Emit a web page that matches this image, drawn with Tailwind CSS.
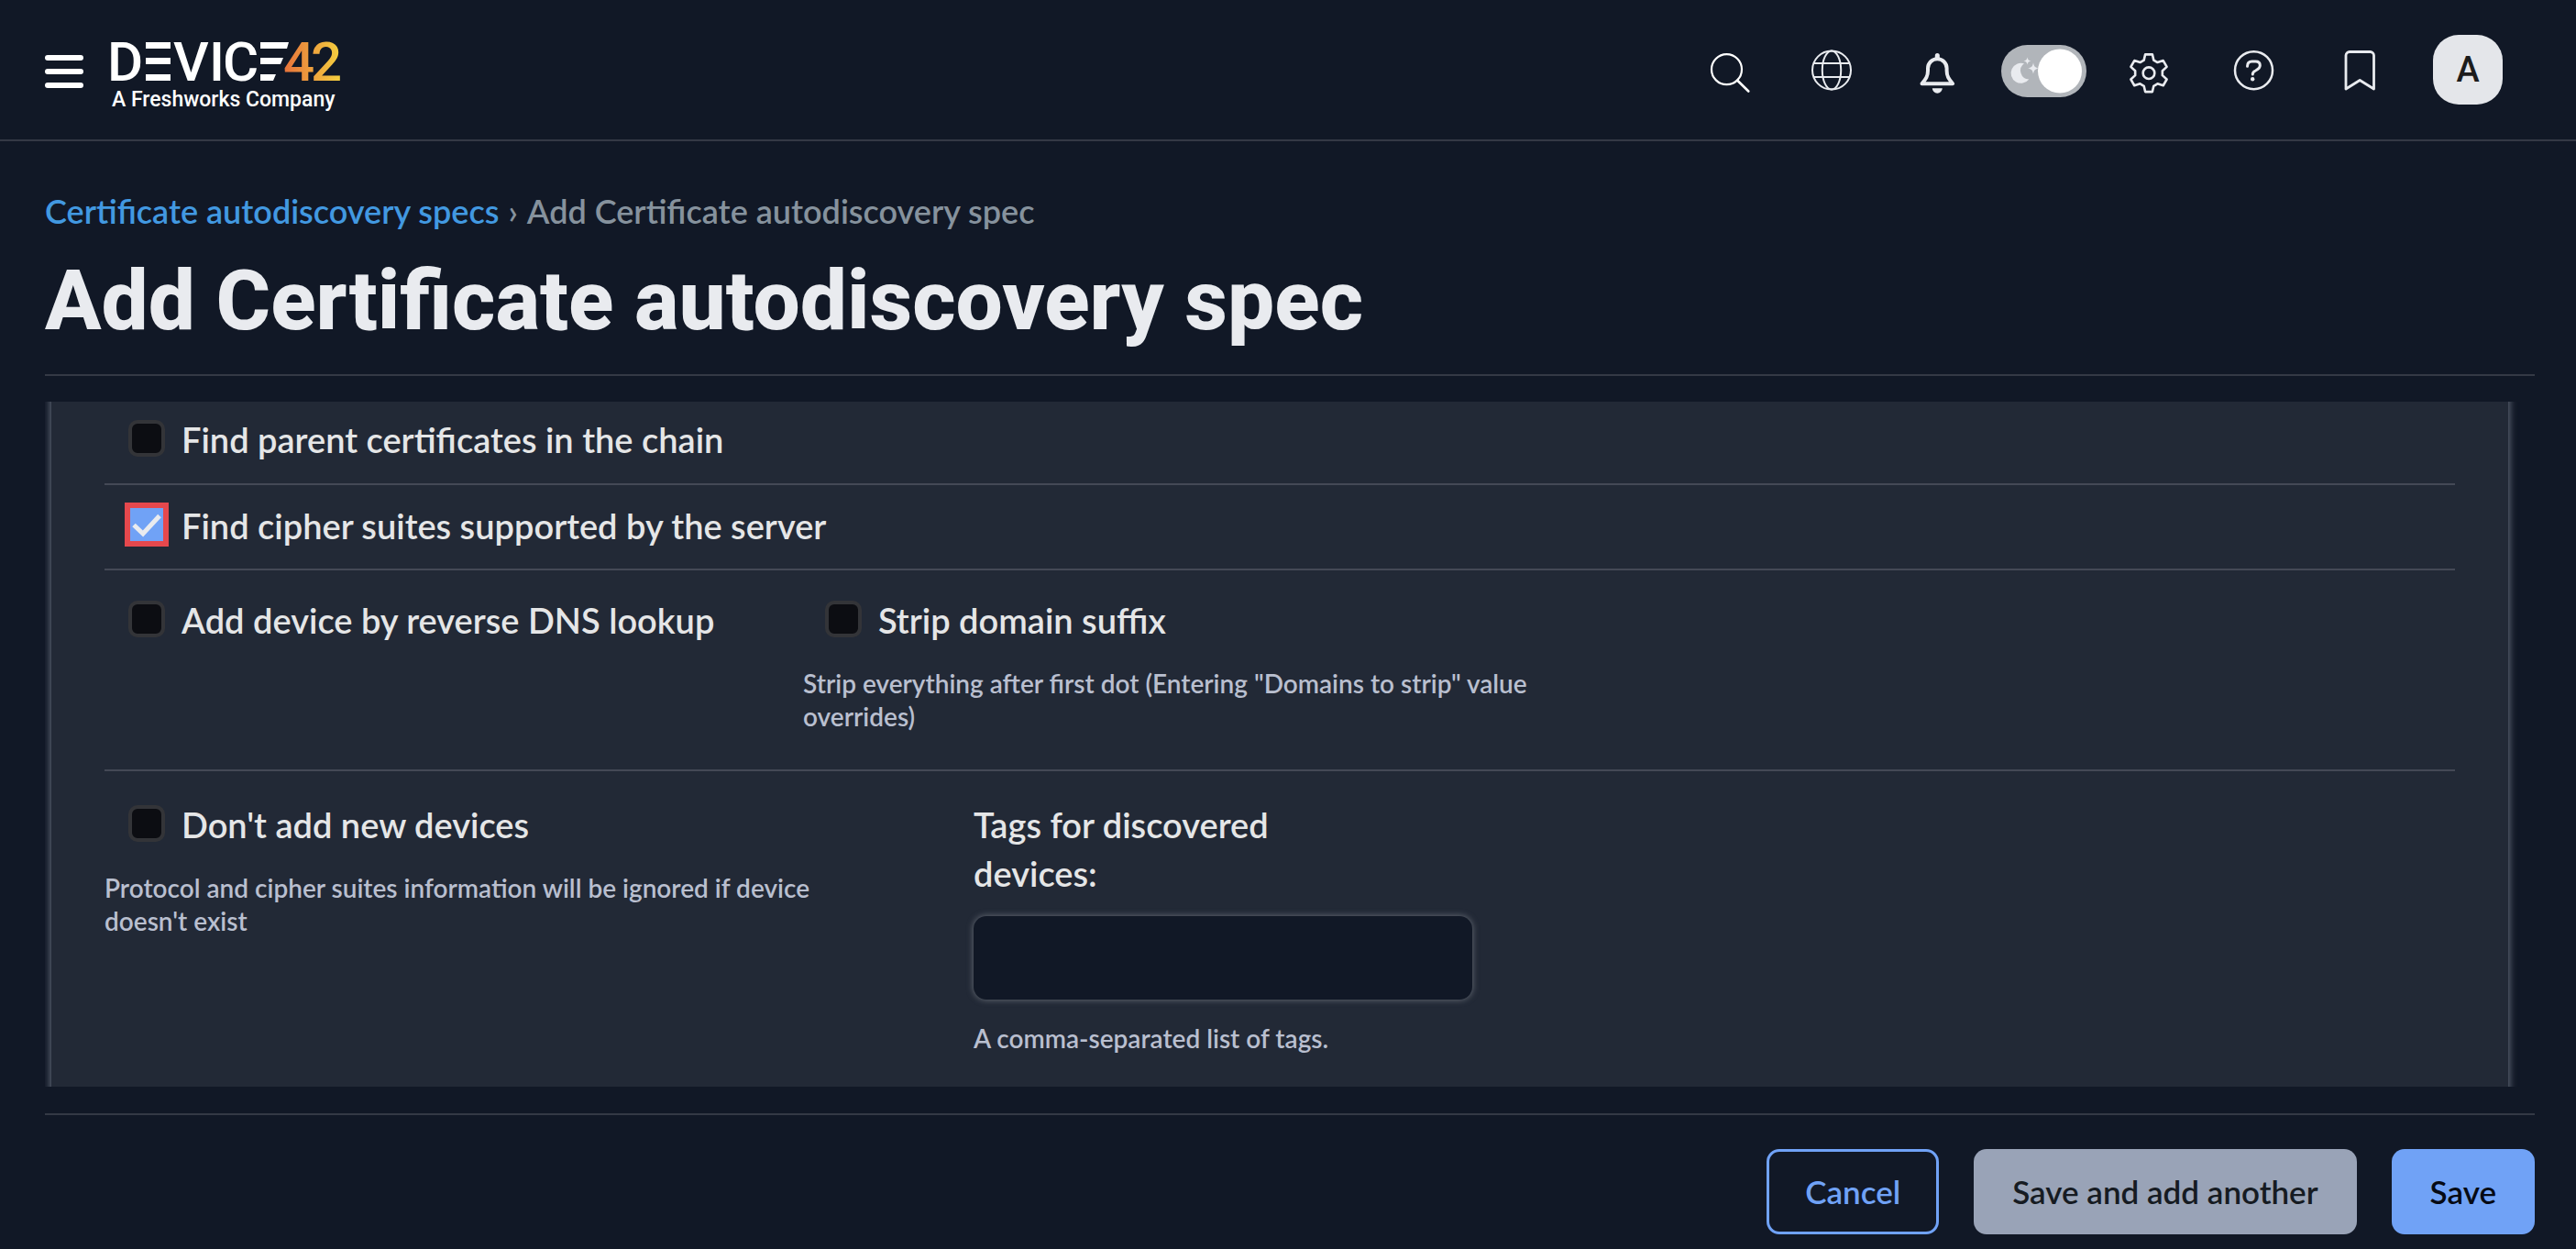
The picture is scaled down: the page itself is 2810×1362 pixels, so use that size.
<!DOCTYPE html>
<html lang="en">
<head>
<meta charset="utf-8">
<meta name="viewport" content="width=device-width, initial-scale=1">
<title>Add Certificate autodiscovery spec</title>
<script src="https://cdn.jsdelivr.net/npm/@tailwindcss/browser@4"></script>
</head>
<body class="min-h-screen bg-[#111826] font-['Lato',sans-serif] font-semibold text-[#e5e6e7]">

<header class="flex h-[154px] items-center border-b-2 border-[#343945] pr-[54px] pl-[49px]">
  <button type="button" aria-label="Menu" class="flex w-[42px] flex-col gap-[9px] pt-1">
    <span class="h-1.5 rounded-full bg-white"></span>
    <span class="h-1.5 rounded-full bg-white"></span>
    <span class="h-1.5 rounded-full bg-white"></span>
  </button>
  <a href="#" aria-label="Device42, a Freshworks Company" class="ml-[30px]">
    <svg class="h-[88px] w-[256px] overflow-visible font-['Roboto',sans-serif]" viewBox="0 0 256 88" fill="#fff">
      <defs>
        <linearGradient id="brand" gradientUnits="userSpaceOnUse" x1="190" y1="0" x2="250" y2="0">
          <stop offset="0" stop-color="#e8743b"/><stop offset="1" stop-color="#f4cf3f"/>
        </linearGradient>
      </defs>
      <g class="text-[60px] font-medium">
        <text x="-4" y="56">D</text>
        <text x="68" y="56">V</text>
        <text x="107" y="56">I</text>
        <text x="122" y="56">C</text>
        <text x="188" y="56" fill="url(#brand)">4</text>
        <text x="218" y="56" fill="url(#brand)">2</text>
      </g>
      <path d="M38 14h27v7H38zM38 31h27v7H38zM38 49h27v7H38z"/>
      <path d="M163 14h31l-2 7h-29zM163 31h25l-3 7h-22zM163 49h17l-3 7h-14z"/>
      <text x="1" y="84" class="text-[23px] font-medium">A Freshworks Company</text>
    </svg>
  </a>

  <nav aria-label="Tools" class="ml-auto grid grid-cols-[repeat(7,114px)_128px] place-items-center">
    <button type="button" aria-label="Search">
      <svg class="size-14" viewBox="0 0 56 56" fill="none" stroke="#fff" stroke-width="2.2" stroke-linecap="round"><circle cx="24.5" cy="27.7" r="16.5"/><path d="M36.3 39.7 48.3 51.5" stroke-width="2.6"/></svg>
    </button>
    <button type="button" aria-label="Language">
      <svg class="size-14" viewBox="0 0 56 56" fill="none" stroke="#e9ebef" stroke-width="2"><circle cx="25" cy="28.5" r="21"/><ellipse cx="25" cy="28.5" rx="10.2" ry="21"/><path d="M5.5 21h39M5.5 36h39"/></svg>
    </button>
    <button type="button" aria-label="Notifications">
      <svg class="size-14" viewBox="0 0 56 56" fill="none" stroke="#e9ebef" stroke-width="4" stroke-linejoin="round" stroke-linecap="round"><path d="M9.5 43.3C14 38 16 35 16 29v-2.500a10.300 10.300 0 0 1 20.600 0V29c0 6 2 9 6.500 14.300z"/><path d="M26.300 12.500v3" stroke-width="5"/><path d="M20.800 48.200h11a5.500 5.500 0 0 1-11 0z" fill="#e9ebef" stroke="none"/></svg>
    </button>
    <label class="cursor-pointer pt-[3px]">
      <input type="checkbox" role="switch" aria-label="Dark mode" checked class="sr-only">
      <svg class="h-[57px] w-[93px]" viewBox="0 0 93 57"><rect width="93" height="57" rx="28.5" fill="#b1b5ba"/><circle cx="64" cy="28.500" r="24" fill="#fff"/><path fill="#e9ebef" d="M25 20.300A11 11 0 1 0 30.300 37.500 9.500 9.500 0 0 1 25 20.300zM28.500 13.500c.5 2.500 1.200 3.300 4 4-2.800.7-3.500 1.500-4 4-.5-2.500-1.200-3.300-4-4 2.800-.7 3.500-1.500 4-4zM35 19.500c.8 4 2 5.200 6 6-4 .8-5.200 2-6 6-.8-4-2-5.200-6-6 4-.8 5.200-2 6-6z"/></svg>
    </label>
    <button type="button" aria-label="Settings">
      <svg class="size-14" viewBox="0 0 56 56" fill="none" stroke="#e9ebef" stroke-width="2.700" stroke-linejoin="round"><g transform="translate(29 31.700) scale(.97)"><path d="M-4-21H4L5.500-14.500 9.800-12 16.200-14 20.200-7 15.300-2.500V2.500L20.200 7 16.200 14 9.800 12 5.500 14.500 4 21H-4L-5.500 14.500-9.800 12-16.200 14-20.200 7-15.300 2.500V-2.500L-20.200-7-16.200-14-9.800-12-5.500-14.500z"/><circle r="6.500"/></g></svg>
    </button>
    <button type="button" aria-label="Help">
      <svg class="size-14" viewBox="-2 0 56 56" fill="none" stroke="#e9ebef" stroke-width="2.500" stroke-linecap="round"><circle cx="27.500" cy="28.700" r="20.500"/><path d="M20.500 24.300c0-3.500 1.500-5.300 5-5.300h4c3.300 0 4.800 1.800 4.800 4.300 0 3.200-2.300 4.500-4.800 5.700-2.500 1.100-3.200 1.800-3.200 4" stroke-width="3"/><circle cx="26.200" cy="38.300" r="2.200" fill="#e9ebef" stroke="none"/></svg>
    </button>
    <button type="button" aria-label="Bookmarks">
      <svg class="size-14" viewBox="-4 0 56 56" fill="none" stroke="#e9ebef" stroke-width="2.800" stroke-linejoin="round"><path d="M12 49V12.500a4 4 0 0 1 4-4h22.500a4 4 0 0 1 4 4V49L27.200 39.500z"/></svg>
    </button>
    <button type="button" aria-label="Account" class="size-[76px] rounded-[28px] bg-[#e4e6ea] font-['Roboto',sans-serif] text-[38px] font-medium text-[#1c1c1c]">A</button>
  </nav>
</header>

<main class="pt-[54px] pr-[45px] pl-[49px]">
  <nav aria-label="Breadcrumb" class="flex gap-2.5 text-[36px] leading-[44px] text-[#86929d]">
    <a href="#" class="text-[#4299e1]">Certificate autodiscovery specs</a>
    <span>›</span>
    <span>Add Certificate autodiscovery spec</span>
  </nav>
  <h1 class="mt-[22px] border-b-2 border-[#343945] pb-[26px] font-['Roboto',sans-serif] text-[91px] leading-[108px] font-extrabold text-[#e9ebef]">Add Certificate autodiscovery spec</h1>

  <form>
    <div class="mt-7 overflow-hidden pr-[29px] pl-[7px]">
      <div class="-my-4 bg-[#222936] px-[58px] py-4 shadow-[0_0_8px_1px_#6b7280]">
        <div class="border-b-2 border-[#444956] pt-[15px] pb-[21px] pl-[26px]">
          <label class="flex items-center gap-[18px] text-[38px] leading-[53px]">
            <input type="checkbox" class="mb-1 size-10 shrink-0 appearance-none rounded-[10px] border-4 border-[#333438] bg-[#0c0d12]">
            Find parent certificates in the chain
          </label>
        </div>
        <div class="border-b-2 border-[#444956] pt-[18px] pb-5 pl-[26px]">
          <label class="flex items-center gap-[18px] text-[38px] leading-[53px]">
            <span class="mb-1 grid size-10 shrink-0 place-items-center">
              <input type="checkbox" checked class="col-start-1 row-start-1 size-9 appearance-none bg-[#70a2f6] ring-6 ring-[#e5484d]">
              <svg class="pointer-events-none col-start-1 row-start-1 size-9" viewBox="0 0 36 36" fill="none" stroke="#e9ebef" stroke-width="5"><path d="M4 18.500 14 28 32 8.500"/></svg>
            </span>
            Find cipher suites supported by the server
          </label>
        </div>
        <div class="grid grid-cols-[762px_1fr] border-b-2 border-[#444956] pt-7 pb-10">
          <label class="flex items-center gap-[18px] self-start pl-[26px] text-[38px] leading-[53px]">
            <input type="checkbox" class="mb-1 size-10 shrink-0 appearance-none rounded-[10px] border-4 border-[#333438] bg-[#0c0d12]">
            Add device by reverse DNS lookup
          </label>
          <div>
            <label class="flex items-center gap-[18px] pl-6 text-[38px] leading-[53px]">
              <input type="checkbox" aria-describedby="strip-help" class="mb-1 size-10 shrink-0 appearance-none rounded-[10px] border-4 border-[#333438] bg-[#0c0d12]">
              Strip domain suffix
            </label>
            <p id="strip-help" class="mt-6 max-w-[820px] text-[28px] leading-9 text-[#b9bfcf]">Strip everything after first dot (Entering "Domains to strip" value overrides)</p>
          </div>
        </div>
        <div class="grid grid-cols-[948px_1fr] pt-8 pb-[35px]">
          <div>
            <label class="flex items-center gap-[18px] pl-[26px] text-[38px] leading-[53px]">
              <input type="checkbox" aria-describedby="devices-help" class="mb-1 size-10 shrink-0 appearance-none rounded-[10px] border-4 border-[#333438] bg-[#0c0d12]">
              Don't add new devices
            </label>
            <p id="devices-help" class="mt-6 max-w-[820px] text-[28px] leading-9 text-[#b9bfcf]">Protocol and cipher suites information will be ignored if device doesn't exist</p>
          </div>
          <div>
            <label for="tags" class="block max-w-[400px] text-[38px] leading-[53px]">Tags for discovered devices:</label>
            <input id="tags" type="text" aria-describedby="tags-help" class="mt-5 block h-[91px] w-[544px] rounded-[14px] bg-[#111826] px-5 text-[35px] shadow-[0_0_6px_1px_#5b616b]">
            <p id="tags-help" class="mt-6 text-[28px] leading-9 text-[#b9bfcf]">A comma-separated list of tags.</p>
          </div>
        </div>
      </div>
    </div>

    <div class="mt-[29px] flex justify-end gap-[38px] border-t-2 border-[#343945] pt-[37px] pb-4 text-[35px]">
      <button type="button" class="h-[93px] rounded-[14px] border-[3px] border-[#70a2f6] px-[39px] text-[#70a2f6]">Cancel</button>
      <button type="submit" class="h-[93px] rounded-[14px] bg-[#99a3b7] px-[42px] text-[#161b22]">Save and add another</button>
      <button type="submit" class="h-[93px] rounded-[14px] bg-[#70a2f6] px-[42px] text-[#060a14]">Save</button>
    </div>
  </form>
</main>
</body>
</html>
